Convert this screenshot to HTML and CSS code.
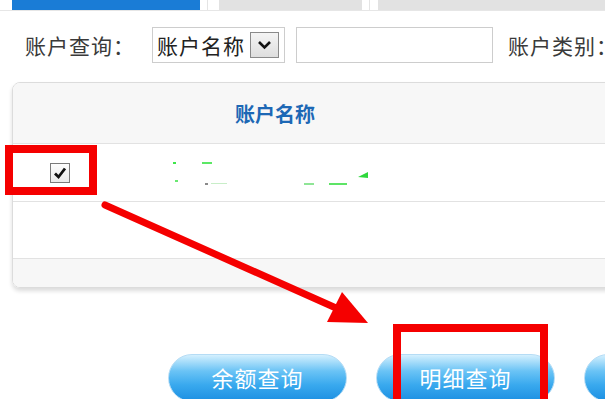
FILE: index.html
```html
<!DOCTYPE html>
<html lang="zh-CN">
<head>
    <meta charset="UTF-8">
    <title>账户查询</title>
    <link rel="stylesheet" href="styles.css">
</head>
<body>
    <div class="tabs">
        <div class="tab tab-active"></div>
        <div class="tab-gap"></div>
        <div class="tab"></div>
        <div class="tab-gap tab-gap-narrow"></div>
        <div class="tab tab-wide"></div>
    </div>

    <div class="search">
        <span class="label">账户查询：</span>
        <div class="select">
            <span class="select-text">账户名称</span>
            <span class="select-btn">
                <svg width="15" height="10" viewBox="0 0 15 10"><path d="M2 2 L7.5 7.5 L13 2" fill="none" stroke="#111" stroke-width="2.6"/></svg>
            </span>
        </div>
        <div class="input"></div>
        <span class="label label-type">账户类别：</span>
    </div>

    <div class="panel">
        <div class="row row-head">
            <div class="cell"></div>
            <div class="cell cell-name">账户名称</div>
            <div class="cell"></div>
        </div>
        <div class="row">
            <div class="cell cell-check">
                <span class="checkbox">
                    <svg width="16" height="16" viewBox="0 0 16 16"><path d="M3 8.5 L6.5 12 L13 3.5" fill="none" stroke="#111" stroke-width="2.8"/></svg>
                </span>
            </div>
            <div class="cell cell-data">
                <!-- blurred account name -->
                <svg width="210" height="30" viewBox="0 0 210 30">
                    <rect x="2" y="4" width="3" height="2" fill="#3ee64a"/>
                    <rect x="31" y="4" width="10" height="2" fill="#5be865"/>
                    <rect x="4" y="22" width="3" height="2" fill="#6ae872"/>
                    <rect x="34" y="25" width="3" height="2" fill="#8a8a8a"/>
                    <rect x="40" y="25" width="16" height="1" fill="#c8eec8"/>
                    <rect x="133" y="25" width="10" height="2" fill="#8fe596"/>
                    <rect x="158" y="25" width="18" height="2" fill="#5de466"/>
                    <path d="M187 19 L197 14 L197 20 Z" fill="#2fd83c"/>
                </svg>
            </div>
            <div class="cell"></div>
        </div>
        <div class="row">
            <div class="cell"></div>
            <div class="cell"></div>
            <div class="cell"></div>
        </div>
        <div class="panel-foot"></div>
    </div>

    <div class="actions">
        <button class="btn">余额查询</button>
        <button class="btn">明细查询</button>
        <button class="btn"></button>
    </div>

    <!-- red annotations drawn over the page -->
    <div class="mark mark-check"></div>
    <div class="mark mark-btn"></div>
    <svg class="arrow" width="605" height="399" viewBox="0 0 605 399">
        <line x1="105" y1="205" x2="336" y2="308" stroke="#f50000" stroke-width="7" stroke-linecap="round"/>
        <polygon points="327,322 342,292 368,323" fill="#f50000"/>
    </svg>
</body>
</html>
```

FILE: styles.css
```css
body {
    margin: 0;
    position: relative;
    width: 605px;
    height: 399px;
    overflow: hidden;
    background: #fff;
    font-family: "Noto Sans CJK SC", "Noto Sans", sans-serif;
    color: #3a3a3a;
}

.tabs {
    display: flex;
    height: 10px;
    padding-left: 12px;
    border-bottom: 1px solid #e6e6e6;
}
.tab {
    flex: none;
    width: 143px;
    background: #e2e2e2;
}
.tab-active {
    width: 188px;
    background: #1a7cd6;
}
.tab-wide {
    flex: 1;
}
.tab-gap {
    flex: none;
    width: 11px;
    margin-left: 7px;
    border-left: 1px solid #e4e4e4;
}
.tab-gap-narrow {
    width: 8px;
}

.search {
    display: flex;
    align-items: center;
    height: 36px;
    margin-top: 16px;
    padding-left: 25px;
    white-space: nowrap;
}
.search > * {
    flex: none;
}
.label {
    font-size: 21px;
    letter-spacing: 1px;
}
.label-type {
    margin-left: 15px;
}
.select {
    display: flex;
    align-items: center;
    box-sizing: border-box;
    width: 133px;
    height: 36px;
    margin-left: 17px;
    padding-left: 4px;
    border: 1px solid #cdcdcd;
}
.select-text {
    font-size: 21px;
    letter-spacing: 1px;
    color: #222;
}
.select-btn {
    display: flex;
    align-items: center;
    justify-content: center;
    box-sizing: border-box;
    width: 29px;
    height: 26px;
    margin-left: 5px;
    border: 1px solid #8a8a8a;
    background: linear-gradient(#f4f4f4, #dedede);
}
.input {
    box-sizing: border-box;
    width: 197px;
    height: 36px;
    margin-left: 11px;
    border: 1px solid #cdcdcd;
}

.panel {
    width: 640px;
    margin: 19px 0 0 12px;
    border: 1px solid #dcdcdc;
    border-radius: 8px;
    overflow: hidden;
    box-shadow: 0 3px 4px rgba(0, 0, 0, 0.14);
}
.row {
    display: grid;
    grid-template-columns: 94px 336px 1fr;
    height: 57px;
    border-bottom: 1px solid #e2e2e2;
}
.row-head {
    height: 60px;
    background: #f7f7f7;
}
.row + .row + .row {
    height: 56px;
}
.cell {
    display: flex;
    align-items: center;
}
.cell-name {
    justify-content: center;
    font-size: 20px;
    font-weight: bold;
    color: #1d68b5;
}
.cell-check {
    justify-content: center;
}
.cell-data {
    padding-left: 64px;
}
.checkbox {
    display: flex;
    align-items: center;
    justify-content: center;
    box-sizing: border-box;
    width: 20px;
    height: 20px;
    border: 1px solid #7a7a7a;
    background: linear-gradient(#fdfdfd, #e9e9e9);
}
.panel-foot {
    height: 28px;
    background: #f7f7f7;
}

.actions {
    display: flex;
    gap: 29px;
    margin-top: 66px;
    padding-left: 168px;
}
.btn {
    flex: none;
    width: 179px;
    height: 48px;
    border: 1px solid #b5dcf5;
    border-radius: 24px;
    background: linear-gradient(#d4f0fe, #6ac3f5 35%, #39a9ee 65%, #1c8fe2);
    color: #fff;
    font-family: "Noto Sans CJK SC", sans-serif;
    font-size: 22px;
    letter-spacing: 1px;
    padding: 0 0 2px;
}

.mark {
    position: absolute;
    border: 8px solid #f50000;
}
.mark-check {
    left: 5px;
    top: 145px;
    width: 76px;
    height: 34px;
}
.mark-btn {
    left: 393px;
    top: 324px;
    width: 139px;
    height: 100px;
}
.arrow {
    position: absolute;
    left: 0;
    top: 0;
}
```
